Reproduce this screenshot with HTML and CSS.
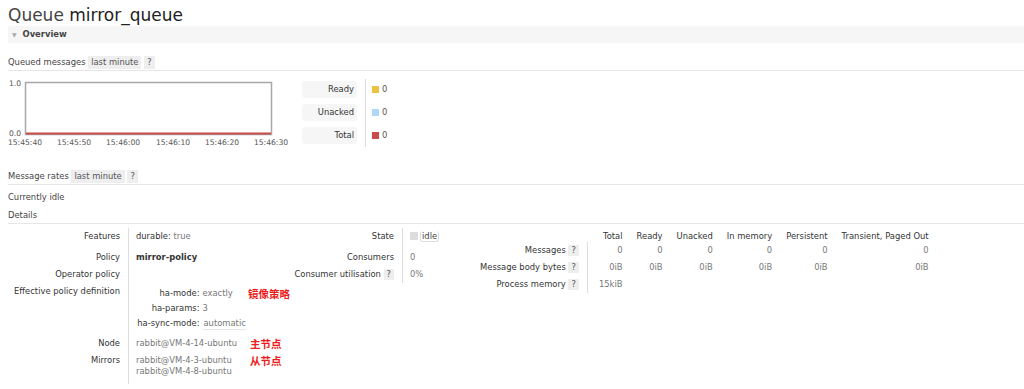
FILE: index.html
```html
<!DOCTYPE html>
<html lang="en">
<head>
    <meta charset="UTF-8">
    <title>Queue mirror_queue</title>
    <link rel="stylesheet" href="styles.css">
</head>
<body>
    <h1 class="title"><span class="lead">Queue</span> mirror_queue</h1>

    <div class="section-head"><span class="arrow">&#9660;</span> Overview</div>

    <div class="sub-head">Queued messages <span class="tag">last minute</span> <span class="tag">?</span></div>

    <div class="chart-row">
        <svg class="chart" width="282" height="74" viewBox="0 0 282 74">
            <text x="13" y="10" text-anchor="end">1.0</text>
            <text x="13" y="60" text-anchor="end">0.0</text>
            <rect x="17.5" y="6.5" width="246" height="52" fill="#fff" stroke="#a8a8a8" stroke-width="1.5"/>
            <line x1="18" y1="57.5" x2="263" y2="57.5" stroke="#cb4b4b" stroke-width="2"/>
            <text x="17" y="69" text-anchor="middle">15:45:40</text>
            <text x="66" y="69" text-anchor="middle">15:45:50</text>
            <text x="115" y="69" text-anchor="middle">15:46:00</text>
            <text x="165" y="69" text-anchor="middle">15:46:10</text>
            <text x="214" y="69" text-anchor="middle">15:46:20</text>
            <text x="263" y="69" text-anchor="middle">15:46:30</text>
        </svg>
        <div class="legend">
            <div class="legend-labels">
                <div class="legend-label">Ready</div>
                <div class="legend-label">Unacked</div>
                <div class="legend-label">Total</div>
            </div>
            <div class="legend-values">
                <div class="legend-value"><span class="swatch ready"></span>0</div>
                <div class="legend-value"><span class="swatch unacked"></span>0</div>
                <div class="legend-value"><span class="swatch total"></span>0</div>
            </div>
        </div>
    </div>

    <div class="sub-head rates">Message rates <span class="tag">last minute</span> <span class="tag">?</span></div>

    <p class="idle">Currently idle</p>

    <div class="sub-head details-head">Details</div>

    <div class="details">
        <table class="facts col-one">
            <tr class="tall">
                <th>Features</th>
                <td><span class="key">durable:</span> <span class="val">true</span></td>
            </tr>
            <tr>
                <th>Policy</th>
                <td><b>mirror-policy</b></td>
            </tr>
            <tr>
                <th>Operator policy</th>
                <td></td>
            </tr>
            <tr>
                <th>Effective policy definition</th>
                <td>
                    <table class="policy">
                        <tr>
                            <td class="pkey">ha-mode:</td>
                            <td class="pval">exactly</td>
                            <td><span class="note">镜像策略</span></td>
                        </tr>
                        <tr>
                            <td class="pkey">ha-params:</td>
                            <td class="pval">3</td>
                            <td></td>
                        </tr>
                        <tr>
                            <td class="pkey">ha-sync-mode:</td>
                            <td class="pval"><span class="boxed">automatic</span></td>
                            <td></td>
                        </tr>
                    </table>
                </td>
            </tr>
            <tr class="node-row">
                <th>Node</th>
                <td><span class="node">rabbit@VM-4-14-ubuntu</span><span class="note">主节点</span></td>
            </tr>
            <tr class="last">
                <th>Mirrors</th>
                <td>
                    <div><span class="node">rabbit@VM-4-3-ubuntu</span><span class="note">从节点</span></div>
                    <div><span class="node">rabbit@VM-4-8-ubuntu</span></div>
                </td>
            </tr>
        </table>

        <table class="facts col-two">
            <tr class="tall">
                <th>State</th>
                <td><span class="state-dot"></span><span class="boxed dark">idle</span></td>
            </tr>
            <tr>
                <th>Consumers</th>
                <td class="val">0</td>
            </tr>
            <tr>
                <th>Consumer utilisation <span class="tag">?</span></th>
                <td class="val">0%</td>
            </tr>
        </table>

        <table class="counts">
            <tr class="head">
                <th></th>
                <th>Total</th>
                <th>Ready</th>
                <th>Unacked</th>
                <th>In memory</th>
                <th>Persistent</th>
                <th>Transient, Paged Out</th>
            </tr>
            <tr>
                <th class="label">Messages <span class="tag">?</span></th>
                <td class="first">0</td>
                <td>0</td>
                <td>0</td>
                <td>0</td>
                <td>0</td>
                <td>0</td>
            </tr>
            <tr>
                <th class="label">Message body bytes <span class="tag">?</span></th>
                <td class="first">0iB</td>
                <td>0iB</td>
                <td>0iB</td>
                <td>0iB</td>
                <td>0iB</td>
                <td>0iB</td>
            </tr>
            <tr>
                <th class="label">Process memory <span class="tag">?</span></th>
                <td class="first">15kiB</td>
                <td></td>
                <td></td>
                <td></td>
                <td></td>
                <td></td>
            </tr>
        </table>
    </div>
</body>
</html>
```

FILE: styles.css
```css
body {
    margin: 0 0 0 8px;
    font-family: "DejaVu Sans", Verdana, sans-serif;
    font-size: 8.4px;
    line-height: 11px;
    color: #444;
    background: #fff;
}
.title {
    margin: 0;
    padding-top: 6px;
    font-size: 17px;
    line-height: 19px;
    font-weight: normal;
    color: #222;
}
.title .lead {
    color: #444;
}
.section-head {
    margin-top: 1px;
    height: 17px;
    line-height: 17px;
    background: #f6f6f6;
    font-weight: bold;
    color: #444;
}
.section-head .arrow {
    display: inline-block;
    margin: 0 3px 0 4px;
    font-size: 6px;
    color: #aaa;
    vertical-align: top;
}
.sub-head {
    margin-top: 12px;
    padding: 1px 0;
    line-height: 13px;
    border-bottom: 1px solid #e6e6e6;
}
.tag {
    display: inline-block;
    padding: 0 3px;
    background: #eee;
    color: #555;
}
.chart-row {
    display: flex;
    align-items: flex-start;
    margin-top: 5px;
}
.chart {
    display: block;
}
.chart text {
    font-family: "DejaVu Sans", Verdana, sans-serif;
    font-size: 7.6px;
    fill: #555;
}
.legend {
    display: flex;
    margin-left: 12px;
    padding-top: 3px;
}
.legend-labels {
    display: flex;
    flex-direction: column;
    gap: 6px;
    padding-top: 2px;
}
.legend-label {
    width: 52px;
    height: 17px;
    line-height: 17px;
    padding-right: 3px;
    text-align: right;
    background: #f6f6f6;
    border-radius: 3px;
    color: #333;
}
.legend-values {
    display: flex;
    flex-direction: column;
    gap: 6px;
    margin-left: 8px;
    padding: 2px 0 3px 6px;
    border-left: 1px solid #ddd;
    color: #555;
}
.legend-value {
    height: 17px;
    line-height: 17px;
}
.swatch {
    display: inline-block;
    width: 7px;
    height: 7px;
    margin-right: 3px;
    vertical-align: -0.5px;
}
.swatch.ready { background: #edc240; }
.swatch.unacked { background: #afd8f8; }
.swatch.total { background: #cb4b4b; }
.rates {
    margin-top: 19px;
}
.idle {
    margin: 7px 0 0;
    line-height: 11px;
}
.details-head {
    margin-top: 5px;
}
.details {
    display: flex;
    align-items: flex-start;
    margin-top: 4px;
}
table {
    border-spacing: 0;
    border-collapse: separate;
}
.facts th {
    text-align: right;
    font-weight: normal;
    vertical-align: top;
    padding: 3px 8px 3px 0;
    color: #333;
    white-space: nowrap;
}
.facts > tbody > tr > td {
    vertical-align: top;
    padding: 3px 0 3px 7px;
    border-left: 1px solid #ddd;
}
.facts tr.tall > th,
.facts tr.tall > td {
    padding-top: 3px;
    padding-bottom: 7px;
}
.facts tr.last > th,
.facts tr.last > td {
    padding-bottom: 7px;
}
.col-one {
    width: 282px;
}
.col-one th {
    width: 112px;
}
.col-two {
    width: 190px;
}
.col-two th {
    width: 104px;
}
.key {
    color: #333;
}
.val {
    color: #777;
}
.facts b {
    color: #333;
}
.policy td {
    padding: 2px 0 2px;
    vertical-align: top;
    white-space: nowrap;
}
.policy .pkey {
    width: 64px;
    padding-right: 3px;
    text-align: right;
    color: #333;
}
.policy .pval {
    width: 46px;
    color: #777;
}
.boxed {
    display: inline-block;
    padding: 0 1px;
    border-bottom: 1px solid #e4e4e4;
    border-radius: 3px;
}
.boxed.dark {
    color: #444;
    border: 1px solid #ddd;
    border-top: none;
    line-height: 10px;
}
.node-row > th,
.node-row > td {
    padding-top: 3px;
}
.node {
    display: inline-block;
    width: 114px;
    color: #777;
}
.note {
    display: inline-block;
    height: 11px;
    vertical-align: top;
    font-family: "Noto Sans CJK SC", sans-serif;
    font-size: 10.5px;
    font-weight: bold;
    color: #ee1c1c;
    line-height: 11px;
    white-space: nowrap;
}
.state-dot {
    display: inline-block;
    width: 8px;
    height: 8px;
    margin-right: 2px;
    background: #ddd;
    vertical-align: -1px;
}
.counts th,
.counts td {
    padding: 3px 0 3px 14px;
    text-align: right;
    white-space: nowrap;
}
.counts th {
    font-weight: normal;
    color: #333;
}
.counts tr.head th {
    padding-top: 3px;
    padding-bottom: 0;
}
.counts th.label {
    width: 98px;
    padding: 3px 8px 3px 0;
}
.counts td {
    color: #777;
}
.counts td.first {
    padding-left: 11px;
    border-left: 1px solid #ddd;
}
```
